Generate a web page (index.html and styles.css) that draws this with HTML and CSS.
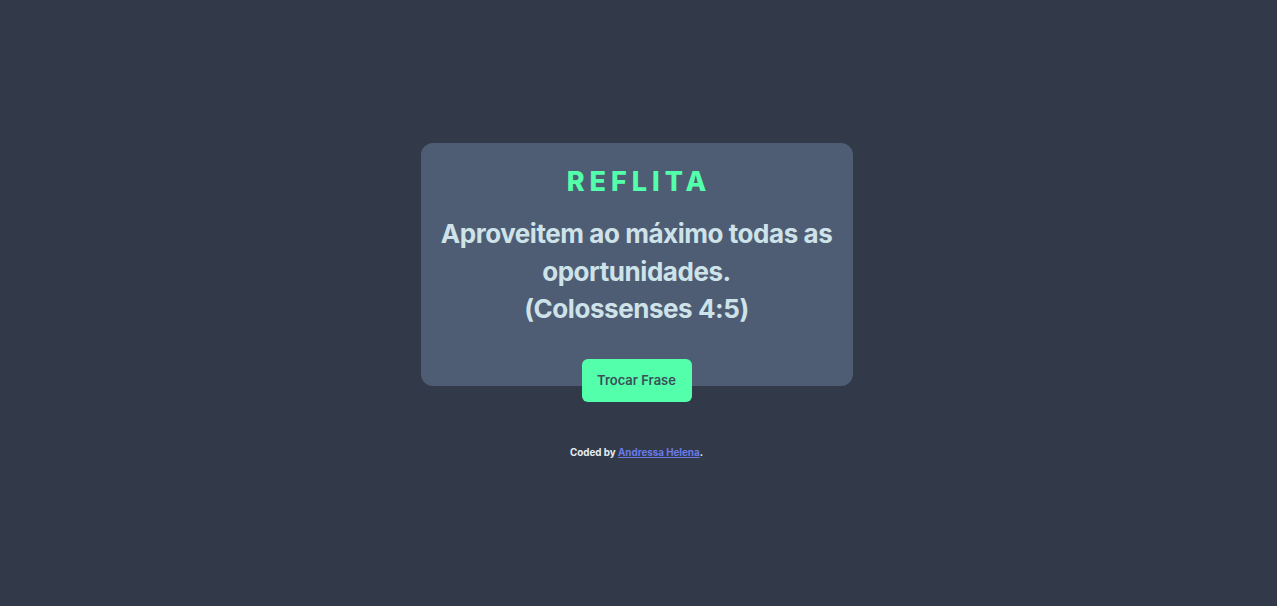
FILE: index.html
```html
<!DOCTYPE html>
<html lang="pt-BR">
<head>
<meta charset="utf-8">
<title>Reflita</title>
<link rel="stylesheet" href="styles.css">
</head>
<body>
<main class="page">
  <section class="card">
    <h1 class="title">REFLITA</h1>
    <p class="quote">Aproveitem ao máximo todas as oportunidades.<br>(Colossenses 4:5)</p>
    <button class="btn" type="button">Trocar Frase</button>
  </section>
  <footer class="attribution">Coded by <a href="#">Andressa Helena</a>.</footer>
</main>
</body>
</html>
```
FILE: styles.css
```css
* { box-sizing: border-box; }
html, body { margin: 0; padding: 0; }
body {
  background: #323a49;
  font-family: Inter, "Open Sans", "Liberation Sans", sans-serif;
}
.page {
  min-height: 100vh;
  display: flex;
  flex-direction: column;
  align-items: center;
  justify-content: center;
  padding: 0 4px 3px 0;
}
.card {
  width: 432px;
  background: #4e5d73;
  border-radius: 12px;
  padding: 22px 18px 0;
  display: flex;
  flex-direction: column;
  align-items: center;
  text-align: center;
}
.title {
  margin: 0;
  color: #53ffaa;
  font-size: 27px;
  line-height: 34px;
  font-weight: 800;
  letter-spacing: 5px;
  padding-left: 5px;
}
.quote {
  margin: 16px 0 0;
  color: #cee3e9;
  font-size: 26px;
  line-height: 37.5px;
  font-weight: 700;
  letter-spacing: -0.45px;
}
.btn {
  margin: 31px 0 -16px;
  width: 110px;
  height: 43px;
  border: 0;
  border-radius: 6px;
  background: #53ffaa;
  color: #3a4f5a;
  font-family: inherit;
  font-size: 13px;
  font-weight: 600;
  cursor: pointer;
}
.attribution {
  margin-top: 60px;
  font-size: 9.8px;
  line-height: 14px;
  font-weight: 700;
  color: #e6ecf2;
}
.attribution a {
  color: #6a79e6;
}
```
